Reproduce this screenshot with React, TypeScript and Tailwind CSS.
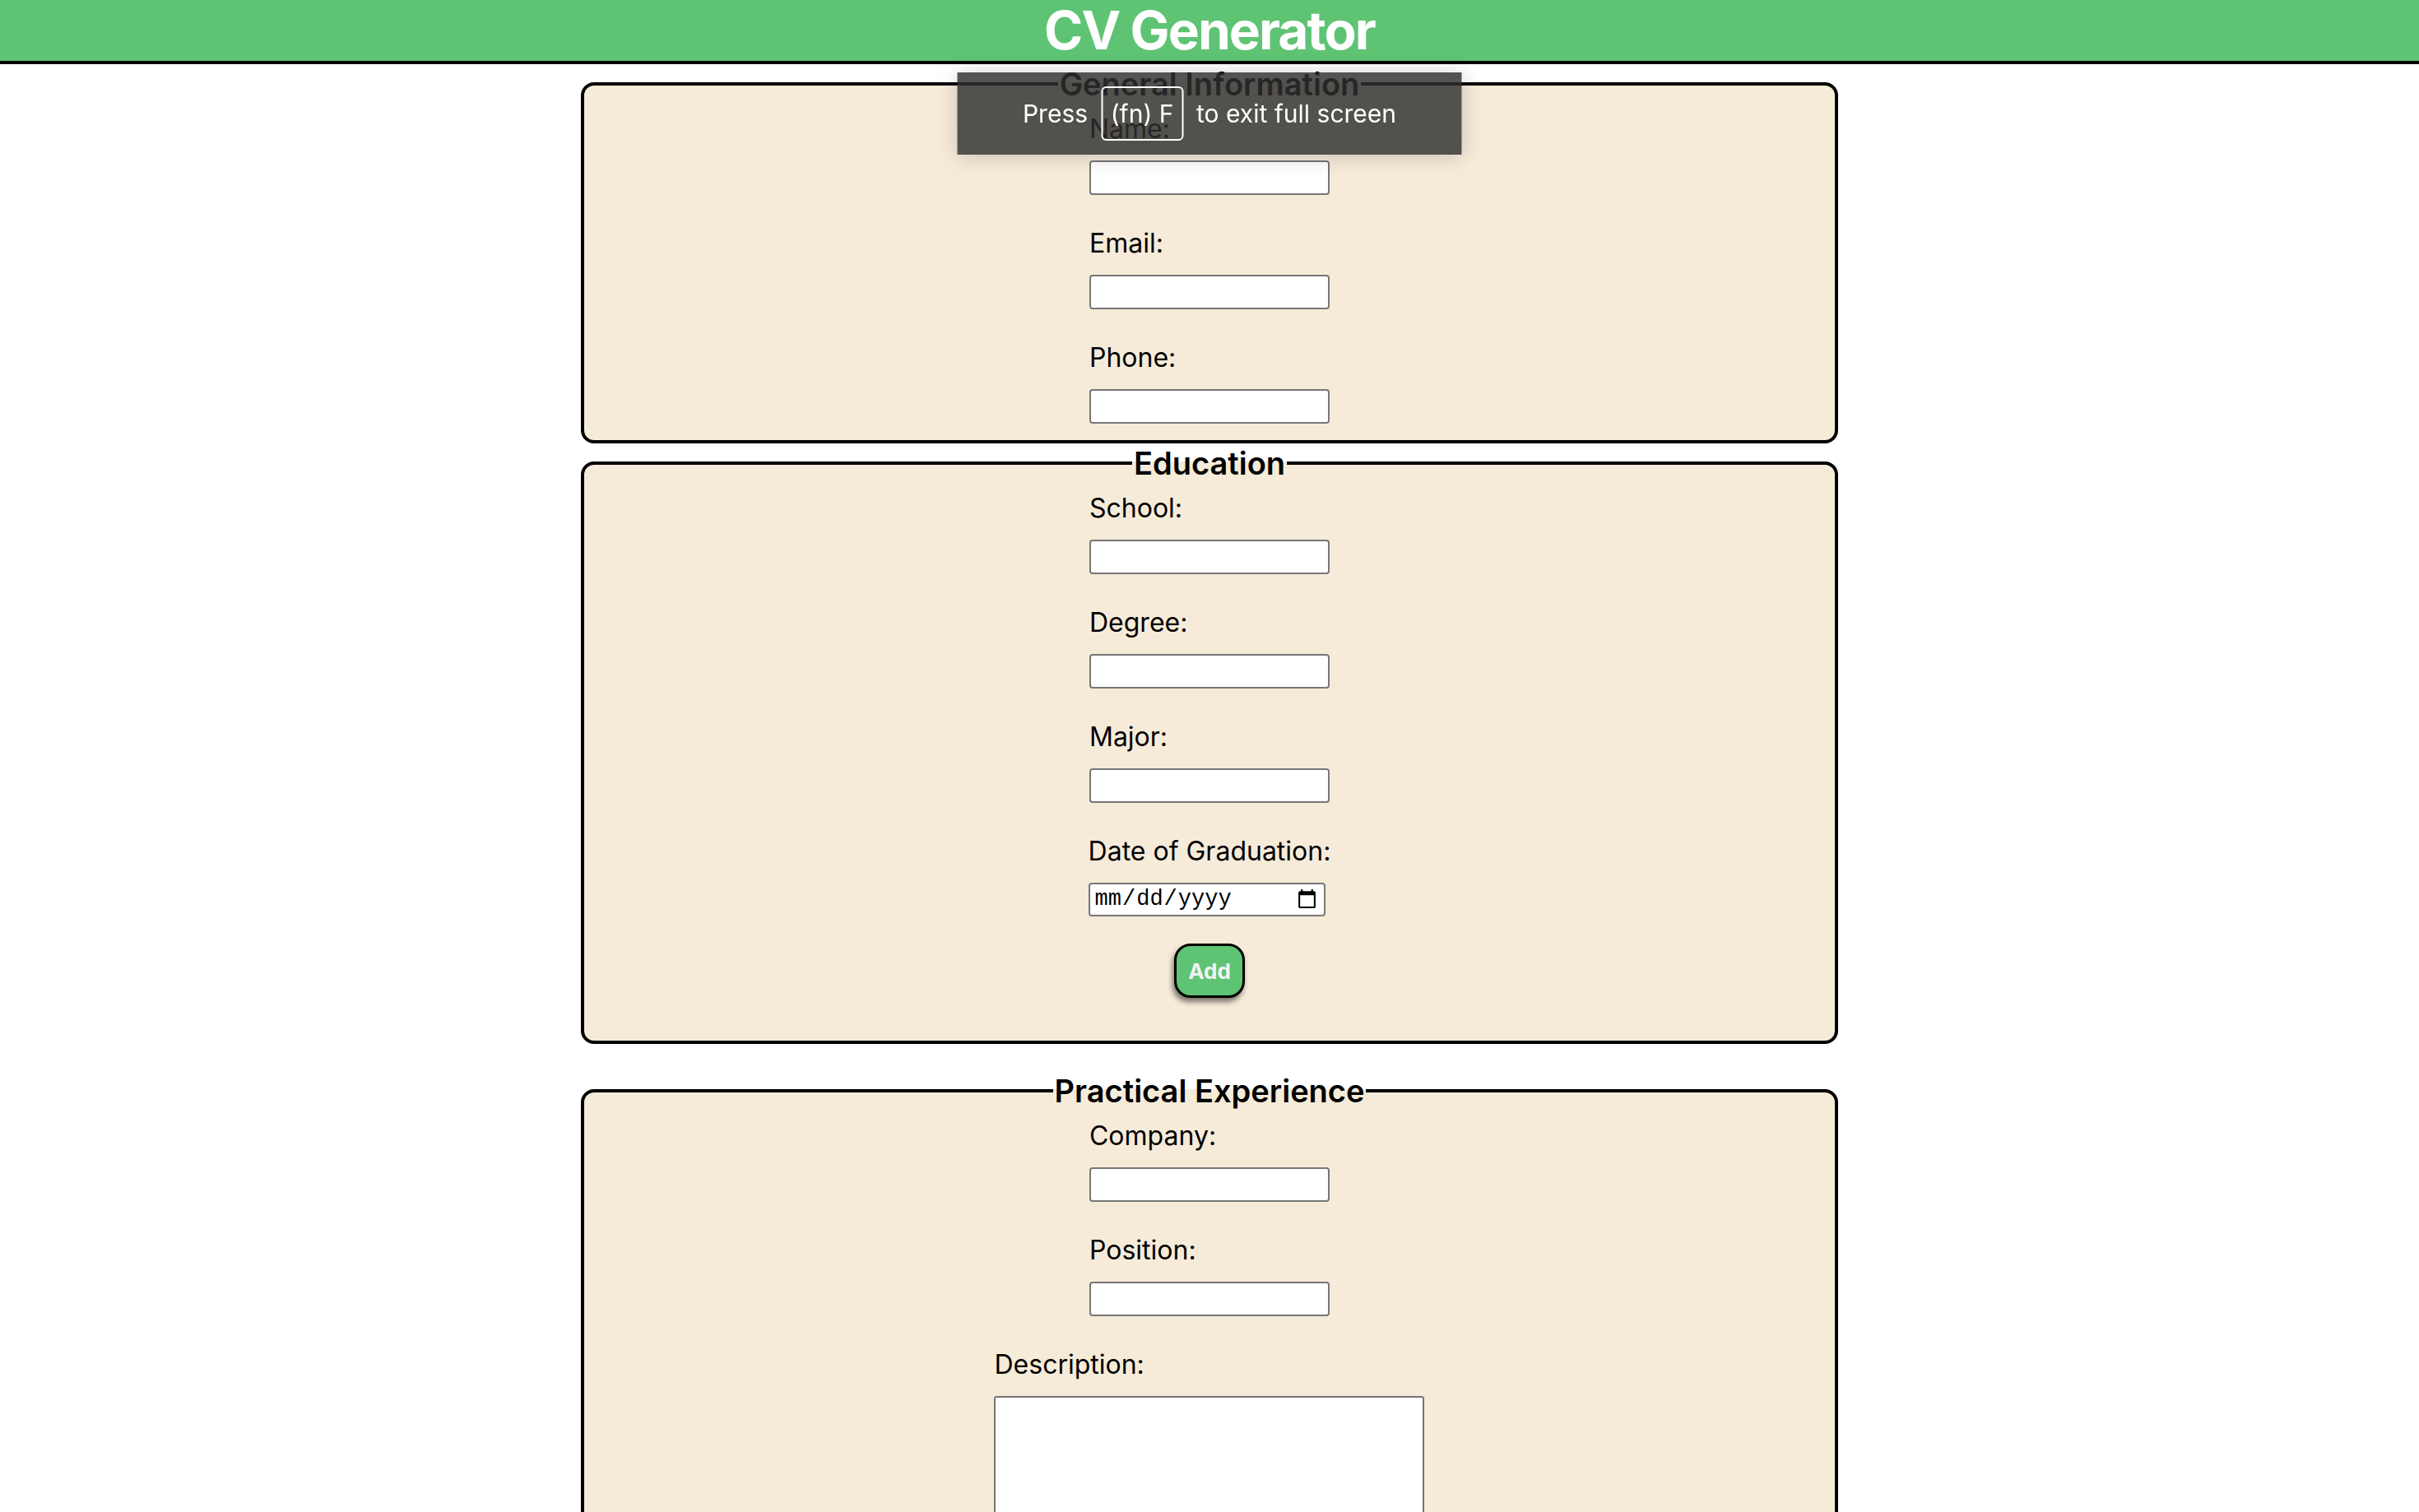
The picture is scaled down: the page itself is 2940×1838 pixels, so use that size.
import React from 'react';

// one label + control, label sits on the control's left edge
const Field = ({ label, children }: { label: string; children: React.ReactNode }) => (
  <div className="flex flex-col items-start gap-[19px]">
    <label className="text-[32px] leading-[39px] text-black">{label}</label>
    {children}
  </div>
);

const TextInput = () => (
  <input
    type="text"
    className="w-[292px] h-[42px] bg-white border-2 border-[#767676] rounded-[4px] px-[5px] text-[26px]"
  />
);

const Section = ({
  title,
  className = '',
  children,
}: {
  title: string;
  className?: string;
  children: React.ReactNode;
}) => (
  <fieldset
    className={`w-[52%] mx-auto border-4 border-black rounded-[16px] bg-[#f6ebd9] px-8 pt-[12px] pb-[20px] ${className}`}
  >
    <legend className="mx-auto px-[2px] text-[38px] leading-[46px] font-semibold text-black">
      {title}
    </legend>
    {children}
  </fieldset>
);

export default function App() {
  return (
    <div className="min-h-screen bg-white font-['Inter','Liberation_Sans',sans-serif] text-black">
      <header className="h-[78px] bg-[#5fc374] border-b-4 border-black flex items-center justify-center">
        <h1 className="text-[64px] leading-none font-bold tracking-[-0.03em] text-white">CV Generator</h1>
      </header>

      <main className="flex flex-col pb-10">
        {/* General Information */}
        <Section title="General Information" className="mt-[1px]">
          <div className="flex flex-col items-center gap-[39px]">
            <Field label="Name:">
              <TextInput />
            </Field>
            <Field label="Email:">
              <TextInput />
            </Field>
            <Field label="Phone:">
              <TextInput />
            </Field>
          </div>
        </Section>

        {/* Education */}
        <Section title="Education" className="mt-[1px]">
          <div className="flex flex-col items-center">
            <div className="flex flex-col items-center gap-[39px]">
              <Field label="School:">
                <TextInput />
              </Field>
              <Field label="Degree:">
                <TextInput />
              </Field>
              <Field label="Major:">
                <TextInput />
              </Field>
              <Field label="Date of Graduation:">
                <input
                  type="date"
                  className="w-[288px] h-[41px] bg-white border-2 border-[#767676] rounded-[4px] px-[5px] text-[27px] font-['Liberation_Mono',monospace] text-black"
                />
              </Field>
            </div>
            <button
              type="button"
              className="mt-[33px] mb-[32px] w-[86px] h-[66px] bg-[#5fc374] border-[3px] border-black rounded-[20px] text-[26px] font-bold text-[#f3f3f3] shadow-[-2px_5px_6px_rgba(0,0,0,0.5)]"
            >
              Add
            </button>
          </div>
        </Section>

        {/* Practical Experience */}
        <Section title="Practical Experience" className="mt-[34px]">
          <div className="flex flex-col items-center gap-[39px]">
            <Field label="Company:">
              <TextInput />
            </Field>
            <Field label="Position:">
              <TextInput />
            </Field>
            <Field label="Description:">
              <textarea className="w-[523px] h-[240px] bg-white border-2 border-[#767676] rounded-[3px] p-[5px] text-[26px] resize-none" />
            </Field>
          </div>
        </Section>
      </main>

      {/* full screen notice from the OS, floating over the page */}
      <div className="fixed top-[88px] left-1/2 -translate-x-1/2 w-[613px] h-[100px] bg-[rgba(46,46,46,0.82)] shadow-[0_2px_24px_rgba(0,0,0,0.18)] flex items-center justify-center gap-[16px] text-white text-[30px]">
        <span>Press</span>
        <span className="w-[100px] h-[66px] border-2 border-white rounded-[6px] flex items-center justify-center">
          (fn) F
        </span>
        <span>to exit full screen</span>
      </div>
    </div>
  );
}
